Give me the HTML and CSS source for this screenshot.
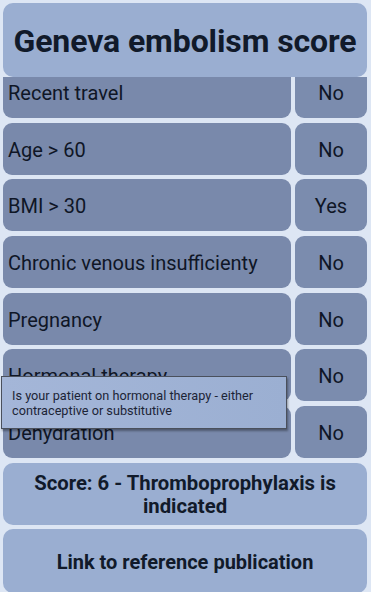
FILE: index.html
```html
<!DOCTYPE html>
<html>
<head>
<meta charset="utf-8">
<link rel="stylesheet" href="styles.css">
</head>
<body>
<div class="screen">
  <header class="title">Geneva embolism score</header>
  <div class="list">
    <div class="inner">
      <div class="row first"><div class="label">Recent travel</div><div class="value">No</div></div>
      <div class="row"><div class="label">Age &gt; 60</div><div class="value">No</div></div>
      <div class="row"><div class="label">BMI &gt; 30</div><div class="value">Yes</div></div>
      <div class="row"><div class="label">Chronic venous insufficienty</div><div class="value">No</div></div>
      <div class="row"><div class="label">Pregnancy</div><div class="value">No</div></div>
      <div class="row"><div class="label">Hormonal therapy</div><div class="value">No</div></div>
      <div class="row"><div class="label">Dehydration</div><div class="value">No</div></div>
      <div class="card score">Score: 6 - Thromboprophylaxis is indicated</div>
      <div class="card link">Link to reference publication</div>
    </div>
  </div>
  <div class="tooltip">Is your patient on hormonal therapy - either contraceptive or substitutive</div>
</div>
</body>
</html>
```
FILE: styles.css
```css
html, body {
  margin: 0;
  padding: 0;
  background: #dde6f4;
}
body {
  width: 371px;
  height: 592px;
  overflow: hidden;
  font-family: Roboto, "Noto Sans", sans-serif;
  color: #0f1626;
}
.screen {
  position: relative;
  width: 371px;
  height: 592px;
  padding: 3px 4px 0 3px;
  box-sizing: border-box;
  display: flex;
  flex-direction: column;
}
.title {
  position: relative;
  z-index: 1;
  flex: none;
  height: 74px;
  box-sizing: border-box;
  padding-top: 2px;
  border-radius: 10px;
  background: #9aaed1;
  display: flex;
  align-items: center;
  justify-content: center;
  font-weight: 700;
  font-size: 32px;
  letter-spacing: -0.1px;
  color: #111a2a;
}
.list {
  flex: 1;
  overflow: hidden;
}
.inner {
  display: flex;
  flex-direction: column;
  gap: 4.67px;
  margin-top: -11px;
}
.row {
  display: grid;
  grid-template-columns: 1fr 72px;
  column-gap: 4px;
  height: 52px;
  flex: none;
}
.label, .value {
  background: #7989ab;
  border-radius: 9px;
  display: flex;
  align-items: center;
  box-sizing: border-box;
  padding-top: 2px;
  font-size: 20px;
  color: #0f1626;
}
.label {
  padding-left: 5px;
  white-space: nowrap;
}
.value {
  justify-content: center;
  background: #7b8cae;
}
.card {
  flex: none;
  box-sizing: border-box;
  background: #9aaed1;
  border-radius: 10px;
  display: flex;
  align-items: center;
  justify-content: center;
  text-align: center;
  font-weight: 700;
  font-size: 20.3px;
  line-height: 23px;
  color: #111a2a;
}
.score {
  height: 62px;
  padding: 2px 26px 0;
}
.link {
  height: 64px;
  padding-top: 3px;
  font-size: 20px;
}
.tooltip {
  position: absolute;
  z-index: 2;
  left: 1px;
  top: 376px;
  width: 269px;
  height: 41px;
  padding: 5px 5px 5px 10px;
  background: linear-gradient(90deg, #a4b6d8, #9bafd2);
  border: 1px solid #4a505c;
  box-shadow: 1px 2px 2px rgba(0,0,0,0.35);
  font-size: 12.7px;
  line-height: 15px;
  color: #1c2436;
  display: flex;
  align-items: center;
}
```
